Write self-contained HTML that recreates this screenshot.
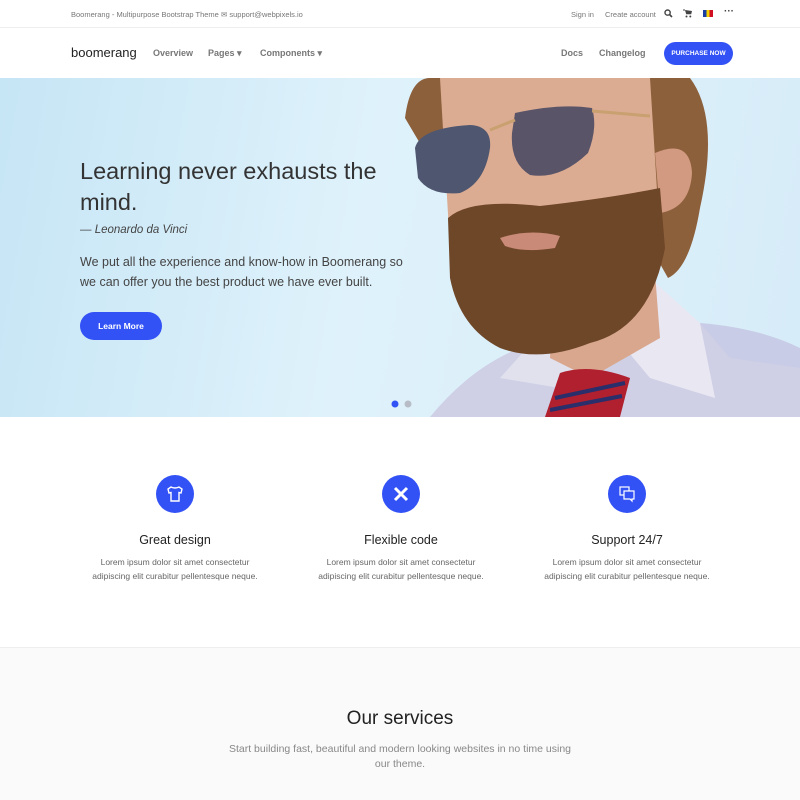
<!DOCTYPE html>
<html><head><meta charset="utf-8">
<style>
*{margin:0;padding:0;box-sizing:border-box}
body{width:800px;height:800px;overflow:hidden;font-family:"Liberation Sans",sans-serif;background:#fff;color:#333;position:relative}
.a{position:absolute;white-space:nowrap}
.top{position:absolute;top:0;left:0;width:800px;height:28px;border-bottom:1px solid #eee;font-size:7.5px;color:#777}
.nav{position:absolute;top:28px;left:0;width:800px;height:50px;font-size:9px;color:#777;font-weight:bold}
.hero{position:absolute;top:78px;left:0;width:800px;height:339px;overflow:hidden;background:linear-gradient(100deg,#c6e5f5 0%,#dff2fb 45%,#d6ecf8 100%)}
.btn{background:#3352f5;color:#fff;border-radius:20px;text-align:center}
.feat{position:absolute;top:0;width:260px;text-align:center}
.circ{width:38px;height:38px;border-radius:50%;background:#3352f5;margin:0 auto}
.ft{font-size:12.5px;color:#222;margin-top:20px}
.fp{font-size:8.5px;color:#666;line-height:14px;margin-top:8px}
</style></head><body>
<div class="top">
<span class="a" style="left:71px;top:10px">Boomerang - Multipurpose Bootstrap Theme</span>
<span class="a" style="left:221px;top:10px">✉ support@webpixels.io</span>
<span class="a" style="left:571px;top:10px">Sign in</span>
<span class="a" style="left:605px;top:10px">Create account</span>
<svg class="a" style="left:664px;top:9px" width="9" height="9" viewBox="0 0 9 9"><circle cx="3.6" cy="3.6" r="2.6" fill="none" stroke="#444" stroke-width="1.4"/><path d="M5.5 5.5L8 8" stroke="#444" stroke-width="1.6"/></svg>
<svg class="a" style="left:683px;top:9px" width="9" height="9" viewBox="0 0 9 9"><path d="M2 1l1.2 4.2h5L9 2z" fill="#444"/><path d="M0 1h2" stroke="#444"/><circle cx="3.5" cy="7.5" r="1" fill="#444"/><circle cx="7.3" cy="7.5" r="1" fill="#444"/></svg>
<div class="a" style="left:703px;top:10px;width:10px;height:7px;background:linear-gradient(90deg,#1a3fa0 33%,#f5d000 33% 66%,#d01020 66%)"></div>
<span class="a" style="left:724px;top:6px;font-size:10px;color:#444;font-weight:bold">···</span>
</div>
<div class="nav">
<span class="a" style="left:71px;top:17px;font-size:13px;color:#222;font-weight:normal">boomerang</span>
<span class="a" style="left:153px;top:20px">Overview</span>
<span class="a" style="left:208px;top:20px">Pages ▾</span>
<span class="a" style="left:260px;top:20px">Components ▾</span>
<span class="a" style="left:561px;top:20px">Docs</span>
<span class="a" style="left:599px;top:20px">Changelog</span>
<div class="a btn" style="left:664px;top:14px;width:69px;height:23px;font-size:6.5px;line-height:23px;font-weight:bold">PURCHASE NOW</div>
</div>
<div class="hero">
<svg class="a" style="left:0;top:0" width="800" height="339" viewBox="0 0 800 339">
<path d="M700 245 Q760 250 800 270 V339 H700z" fill="#c9cce6"/>
<path d="M430 339 Q470 290 520 270 L640 250 L700 245 L730 280 L800 290 V339z" fill="#cfd0e6"/>
<path d="M600 240 L650 200 L700 245 L715 320 L650 300z" fill="#e8e7f2"/>
<path d="M500 300 L545 250 L580 295 L560 310z" fill="#e1e1ee"/>
<path d="M555 200 L655 195 L660 260 L590 300 L550 280z" fill="#d8a78e"/>
<path d="M405 40 Q410 0 430 0 H690 Q720 40 700 130 Q690 190 668 200 L640 150 L470 150z" fill="#8d603c"/>
<path d="M440 0 H650 L660 160 L450 170 Z" fill="#dcac92"/>
<path d="M655 75 Q690 60 692 95 Q690 130 660 135z" fill="#d29a80"/>
<path d="M448 140 Q470 120 540 128 Q610 120 660 110 L665 170 Q650 250 590 265 Q540 285 500 270 Q460 250 450 200z" fill="#6e4628"/>
<path d="M500 160 Q530 150 560 158 L555 170 Q525 175 505 168z" fill="#c98a78"/>
<path d="M415 70 Q420 50 470 47 Q492 48 490 70 Q485 105 460 115 Q430 118 418 100z" fill="#4f5670"/>
<path d="M515 35 Q560 25 592 30 Q598 50 588 75 Q560 102 530 97 Q510 85 512 55z" fill="#5a5468"/>
<path d="M490 52 L515 42 M592 33 L650 38" stroke="#c9a070" stroke-width="3" fill="none"/>
<path d="M545 339 L560 295 Q590 285 630 300 L620 339z" fill="#b1202e"/>
<path d="M555 320 L625 305 M550 332 L622 318" stroke="#2a2e6a" stroke-width="4"/>
<circle cx="395" cy="326" r="3.5" fill="#3352f5"/><circle cx="408" cy="326" r="3.5" fill="#b7bcc6"/>
</svg>
<div class="a" style="left:80px;top:78px;font-size:23.5px;color:#333;line-height:31px;white-space:normal;width:320px">Learning never exhausts the mind.</div>
<div class="a" style="left:80px;top:146px;font-size:11.5px;color:#444;font-style:italic">— Leonardo da Vinci</div>
<div class="a" style="left:80px;top:174px;font-size:12.5px;color:#444;line-height:20px;white-space:normal;width:340px">We put all the experience and know-how in Boomerang so<br>we can offer you the best product we have ever built.</div>
<div class="a btn" style="left:80px;top:234px;width:82px;height:28px;line-height:28px;font-size:8.5px;font-weight:bold">Learn More</div>
</div>
<div class="a" style="left:0;top:475px;width:800px;height:120px">
<div class="feat" style="left:45px"><div class="circ"><svg width="38" height="38" viewBox="0 0 38 38"><path d="M15 12 L12 14 L13 18 L15 17.5 V26 H23 V17.5 L25 18 L26 14 L23 12 Q19 14 15 12z" fill="none" stroke="#fff" stroke-width="1.4"/></svg></div><div class="ft">Great design</div><div class="fp">Lorem ipsum dolor sit amet consectetur<br>adipiscing elit curabitur pellentesque neque.</div></div>
<div class="feat" style="left:271px"><div class="circ"><svg width="38" height="38" viewBox="0 0 38 38"><path d="M13 13 L25 25 M25 13 L13 25" stroke="#fff" stroke-width="3"/></svg></div><div class="ft">Flexible code</div><div class="fp">Lorem ipsum dolor sit amet consectetur<br>adipiscing elit curabitur pellentesque neque.</div></div>
<div class="feat" style="left:497px"><div class="circ"><svg width="38" height="38" viewBox="0 0 38 38"><rect x="12" y="12" width="9" height="8" fill="none" stroke="#fff" stroke-width="1.2"/><path d="M16 16 H26 V24 H24 V26 L22 24 H16z" fill="#3352f5" stroke="#fff" stroke-width="1.2"/></svg></div><div class="ft">Support 24/7</div><div class="fp">Lorem ipsum dolor sit amet consectetur<br>adipiscing elit curabitur pellentesque neque.</div></div>
</div>
<div class="a" style="left:0;top:647px;width:800px;height:153px;background:#fafafa;border-top:1px solid #eee">
<div style="text-align:center;margin-top:60px;font-size:19px;color:#222">Our services</div>
<div style="text-align:center;margin-top:12px;font-size:10.5px;color:#888;line-height:15px">Start building fast, beautiful and modern looking websites in no time using<br>our theme.</div>
</div>
</body></html>
